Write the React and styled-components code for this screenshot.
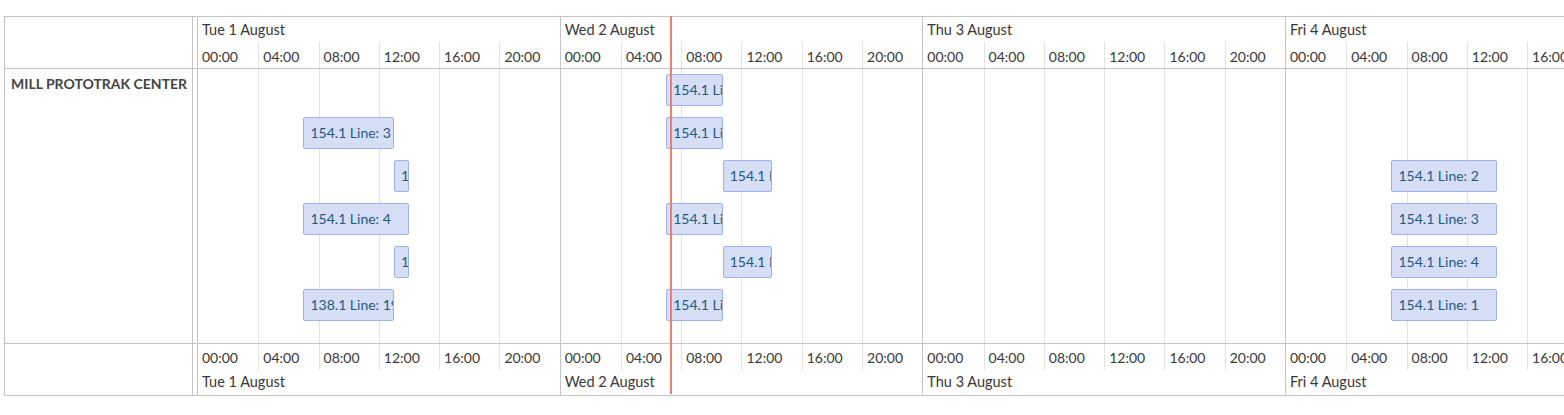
import React from "react";
import styled, { createGlobalStyle } from "styled-components";

const DAY_W = 362.667;
const HOUR_PX = (DAY_W - 1) / 24;
const LEFT_W = 188;
const GAP_W = 4;

const GlobalStyle = createGlobalStyle`
  html, body { margin: 0; padding: 0; background: #fff; overflow: hidden; }
  body { font-family: "Source Sans Pro", Lato, "Liberation Sans", sans-serif; color: #383838; }
  *, *::before, *::after { box-sizing: border-box; }
`;

const Page = styled.div`
  padding: 16px 0 0 4px;
  width: 1700px;
`;

const Chart = styled.div`
  position: relative;
  border: 1px solid #c4c4c4;
  border-right: none;
  display: flex;
  flex-direction: column;
`;

const Band = styled.div`
  display: flex;
  border-bottom: ${(p) => (p.$last ? "none" : "1px solid #c4c4c4")};
  height: ${(p) => p.$h}px;
`;

const LeftCell = styled.div`
  width: ${LEFT_W}px;
  flex: none;
  border-right: 1px solid #c4c4c4;
  padding: ${(p) => (p.$label ? "7px 0 0 6px" : "0")};
  font-size: 14px;
  font-weight: 700;
  line-height: 16px;
  color: #444;
  white-space: nowrap;
`;

const Gap = styled.div`
  width: ${GAP_W}px;
  flex: none;
`;

const Strip = styled.div`
  display: flex;
  position: relative;
  flex: none;
  height: ${(p) => (p.$fill ? "100%" : "auto")};
`;

const DayCol = styled.div`
  width: ${DAY_W}px;
  flex: none;
  border-left: 1px solid #c4c4c4;
  display: flex;
  flex-direction: ${(p) => (p.$reverse ? "column-reverse" : "column")};
`;

const DayLabel = styled.div`
  height: 25px;
  padding: ${(p) => (p.$foot ? "3px 0 0 4px" : "4px 0 0 4px")};
  font-size: 14.5px;
  line-height: 18px;
  white-space: nowrap;
`;

const HourRow = styled.div`
  display: grid;
  grid-template-columns: repeat(6, 1fr);
  height: ${(p) => p.$h}px;
`;

const HourCell = styled.div`
  border-left: ${(p) => (p.$first ? "none" : "1px solid #e2e2e2")};
  padding: ${(p) => (p.$foot ? "5px 0 0 4px" : "6px 0 0 4px")};
  font-size: 14px;
  line-height: 18px;
  white-space: nowrap;
`;

const BodyArea = styled.div`
  position: relative;
  flex: none;
`;

const Lanes = styled.div`
  position: absolute;
  inset: 0;
  display: flex;
  flex-direction: column;
  gap: 11px;
  padding-top: 5px;
`;

const Lane = styled.div`
  position: relative;
  height: 32px;
`;

const EventBox = styled.div`
  position: absolute;
  top: 0;
  height: 32px;
  background: #d6def6;
  border: 1px solid #9db2ef;
  border-radius: 2px;
  color: #1f5a82;
  font-size: 14px;
  line-height: 30px;
  padding-left: 6px;
  white-space: nowrap;
  overflow: hidden;
`;

const NowLine = styled.div`
  position: absolute;
  top: -1px;
  bottom: 1px;
  width: 2px;
  background: #f77b6b;
  z-index: 3;
`;

const days = [
  "Tue 1 August",
  "Wed 2 August",
  "Thu 3 August",
  "Fri 4 August",
  "Sat 5 August",
];
const hours = ["00:00", "04:00", "08:00", "12:00", "16:00", "20:00"];

const lanes = [
  [{ d: 1, s: 7, e: 10.75, t: "154.1 Line: 2" }],
  [
    { d: 0, s: 7, e: 13, t: "154.1 Line: 3" },
    { d: 1, s: 7, e: 10.75, t: "154.1 Line: 3" },
  ],
  [
    { d: 0, s: 13, e: 14, t: "154.1 Line: 2" },
    { d: 1, s: 10.75, e: 14, t: "154.1 Line: 2" },
    { d: 3, s: 7, e: 14, t: "154.1 Line: 2" },
  ],
  [
    { d: 0, s: 7, e: 14, t: "154.1 Line: 4" },
    { d: 1, s: 7, e: 10.75, t: "154.1 Line: 4" },
    { d: 3, s: 7, e: 14, t: "154.1 Line: 3" },
  ],
  [
    { d: 0, s: 13, e: 14, t: "16.1 Line: 1" },
    { d: 1, s: 10.75, e: 14, t: "154.1 Line: 1" },
    { d: 3, s: 7, e: 14, t: "154.1 Line: 4" },
  ],
  [
    { d: 0, s: 7, e: 13, t: "138.1 Line: 19" },
    { d: 1, s: 7, e: 10.75, t: "154.1 Line: 1" },
    { d: 3, s: 7, e: 14, t: "154.1 Line: 1" },
  ],
];

const xOf = (d, h) => d * DAY_W + 1 + h * HOUR_PX;

function TimeHeader({ foot }) {
  return (
    <Strip>
      {days.map((d) => (
        <DayCol key={d} $reverse={foot}>
          <DayLabel $foot={foot}>{d}</DayLabel>
          <HourRow $h={26}>
            {hours.map((h, i) => (
              <HourCell key={h} $first={i === 0} $foot={foot}>
                {h}
              </HourCell>
            ))}
          </HourRow>
        </DayCol>
      ))}
    </Strip>
  );
}

export default function App() {
  const nowX = LEFT_W + GAP_W + xOf(1, 7.33) - 1;
  return (
    <>
      <GlobalStyle />
      <Page>
        <Chart>
          <Band $h={52}>
            <LeftCell />
            <Gap />
            <TimeHeader />
          </Band>
          <Band $h={275}>
            <LeftCell $label>MILL PROTOTRAK CENTER</LeftCell>
            <Gap />
            <BodyArea>
              <Strip $fill>
                {days.map((d) => (
                  <DayCol key={d}>
                    <HourRow $h={274}>
                      {hours.map((h, i) => (
                        <HourCell key={h} $first={i === 0} />
                      ))}
                    </HourRow>
                  </DayCol>
                ))}
              </Strip>
              <Lanes>
                {lanes.map((lane, li) => (
                  <Lane key={li}>
                    {lane.map((ev, ei) => {
                      const l = xOf(ev.d, ev.s);
                      const r = xOf(ev.d, ev.e) + 0.5;
                      return (
                        <EventBox key={ei} style={{ left: l, width: r - l }}>
                          {ev.t}
                        </EventBox>
                      );
                    })}
                  </Lane>
                ))}
              </Lanes>
            </BodyArea>
          </Band>
          <Band $h={51} $last>
            <LeftCell />
            <Gap />
            <TimeHeader foot />
          </Band>
          <NowLine style={{ left: nowX }} />
        </Chart>
      </Page>
    </>
  );
}
